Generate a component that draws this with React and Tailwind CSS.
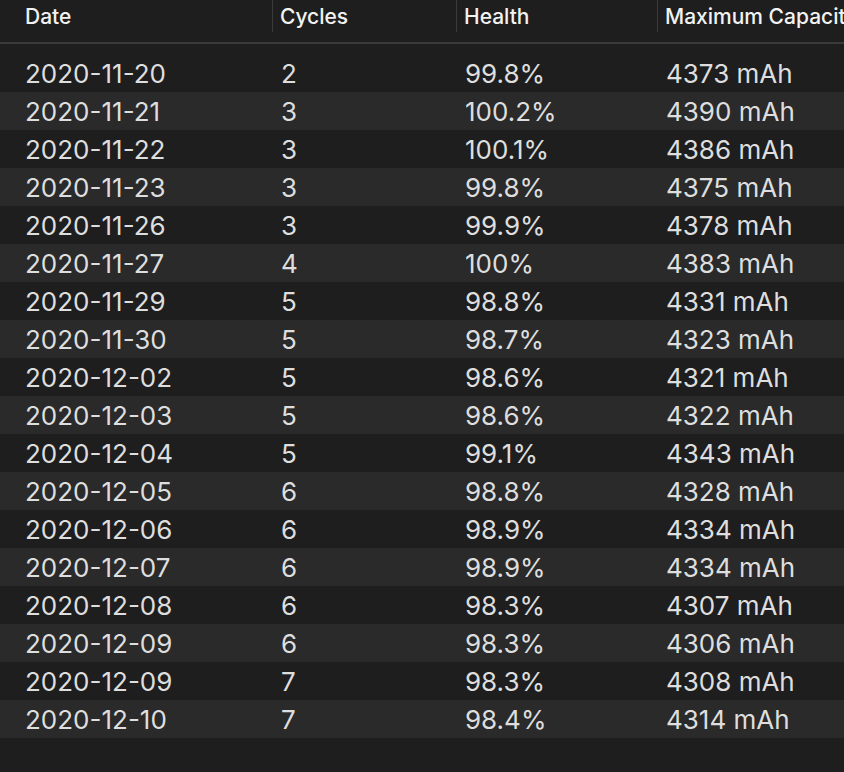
import React from "react";

const rows = [
  ["2020-11-20", "2", "99.8%", "4373 mAh"],
  ["2020-11-21", "3", "100.2%", "4390 mAh"],
  ["2020-11-22", "3", "100.1%", "4386 mAh"],
  ["2020-11-23", "3", "99.8%", "4375 mAh"],
  ["2020-11-26", "3", "99.9%", "4378 mAh"],
  ["2020-11-27", "4", "100%", "4383 mAh"],
  ["2020-11-29", "5", "98.8%", "4331 mAh"],
  ["2020-11-30", "5", "98.7%", "4323 mAh"],
  ["2020-12-02", "5", "98.6%", "4321 mAh"],
  ["2020-12-03", "5", "98.6%", "4322 mAh"],
  ["2020-12-04", "5", "99.1%", "4343 mAh"],
  ["2020-12-05", "6", "98.8%", "4328 mAh"],
  ["2020-12-06", "6", "98.9%", "4334 mAh"],
  ["2020-12-07", "6", "98.9%", "4334 mAh"],
  ["2020-12-08", "6", "98.3%", "4307 mAh"],
  ["2020-12-09", "6", "98.3%", "4306 mAh"],
  ["2020-12-09", "7", "98.3%", "4308 mAh"],
  ["2020-12-10", "7", "98.4%", "4314 mAh"],
];

export default function App() {
  return (
    <div
      className="w-[844px] h-[772px] overflow-hidden bg-[#1e1e1e] text-[#dedede]"
      style={{ fontFamily: "Inter, 'Noto Sans', sans-serif" }}
    >
      <div className="w-[1000px]">
        <div className="flex h-[44px] border-b-2 border-[#3a3a3a] text-[21px] font-medium text-[#f2f2f2]">
          <div className="w-[273px] pl-[25px] pt-[2px] border-r border-[#3a3a3a] h-[32px] flex items-center">Date</div>
          <div className="w-[184px] pl-[7px] pt-[2px] border-r border-[#3a3a3a] h-[32px] flex items-center">Cycles</div>
          <div className="w-[201px] pl-[7px] pt-[2px] border-r border-[#3a3a3a] h-[32px] flex items-center">Health</div>
          <div className="flex-1 pl-[7px] pt-[2px] h-[32px] flex items-center whitespace-nowrap">Maximum Capacity</div>
        </div>
        <div className="pt-[10px] text-[26px]">
          {rows.map((r, i) => (
            <div
              key={i}
              className={`flex h-[38px] items-center ${i % 2 === 1 ? "bg-[#2a2a2a]" : "bg-[#1e1e1e]"}`}
            >
              <div className="w-[274px] pl-[25px]">{r[0]}</div>
              <div className="w-[184px] pl-[7px]">{r[1]}</div>
              <div className="w-[201px] pl-[7px]">{r[2]}</div>
              <div className="flex-1 pl-[7px] whitespace-nowrap">{r[3]}</div>
            </div>
          ))}
        </div>
      </div>
    </div>
  );
}
